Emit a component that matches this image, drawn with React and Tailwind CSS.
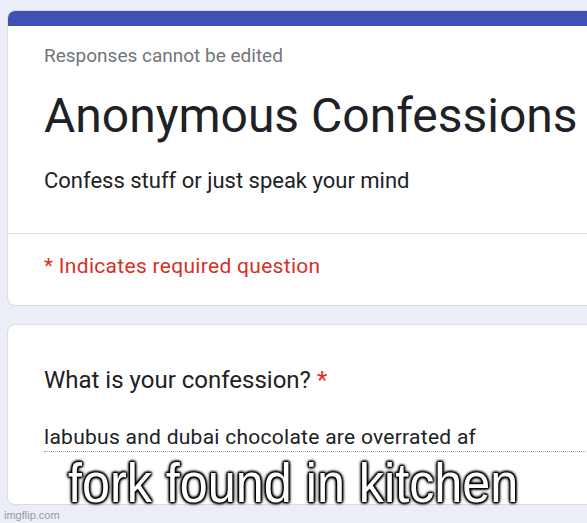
export default function App() {
  return (
    <div className="relative w-[587px] h-[523px] overflow-hidden bg-[#ebedf7] pt-[10px] pl-[7px] font-['Roboto',sans-serif]">
      {/* Header card */}
      <div className="w-[620px] rounded-lg border border-[#dadce0] bg-white overflow-hidden">
        <div className="h-[15px] bg-[#3f51b5]" />
        <div className="pl-[36px] pt-[18px]">
          <div className="text-[19px] leading-[24px] text-[#70757a]">Responses cannot be edited</div>
          <div className="mt-[20px] text-[48px] leading-[56px] text-[#202124]">Anonymous Confessions</div>
          <div className="mt-[23px] text-[22px] leading-[28px] text-[#202124]">Confess stuff or just speak your mind</div>
        </div>
        <div className="mt-[38px] border-t border-[#dadce0] pl-[36px] pt-[18px] pb-[25px]">
          <div className="text-[21px] leading-[28px] tracking-[0.3px] text-[#d93025]">* Indicates required question</div>
        </div>
      </div>

      {/* Question card */}
      <div className="mt-[18px] w-[620px] rounded-lg border border-[#dadce0] bg-white pl-[36px] pt-[41px] pb-[52px]">
        <div className="text-[24px] leading-[28px] text-[#202124]">
          What is your confession? <span className="text-[#d93025]">*</span>
        </div>
        <div className="mt-[30px] border-b border-dotted border-[#9aa0a6] pb-[1px] text-[21px] leading-[26px] tracking-[0.27px] text-[#202124]">
          labubus and dubai chocolate are overrated af
        </div>
      </div>

      {/* Meme caption */}
      <div className="absolute left-0 right-0 top-[450px] flex justify-center">
        <div className="scale-x-[0.915] font-['Liberation_Sans',Arial,sans-serif] text-[55px] leading-[66px] text-white [text-shadow:1px_1px_2px_#000,-1px_-1px_2px_#000,1px_-1px_2px_#000,-1px_1px_2px_#000,0_0_3px_#000,0_0_4px_#000,0_0_5px_#000]">
          fork found in kitchen
        </div>
      </div>

      <div className="absolute left-[4px] top-[508px] font-['Liberation_Sans',Arial,sans-serif] text-[11px] leading-[14px] text-[#9a9a9a]">
        imgflip.com
      </div>
    </div>
  );
}
